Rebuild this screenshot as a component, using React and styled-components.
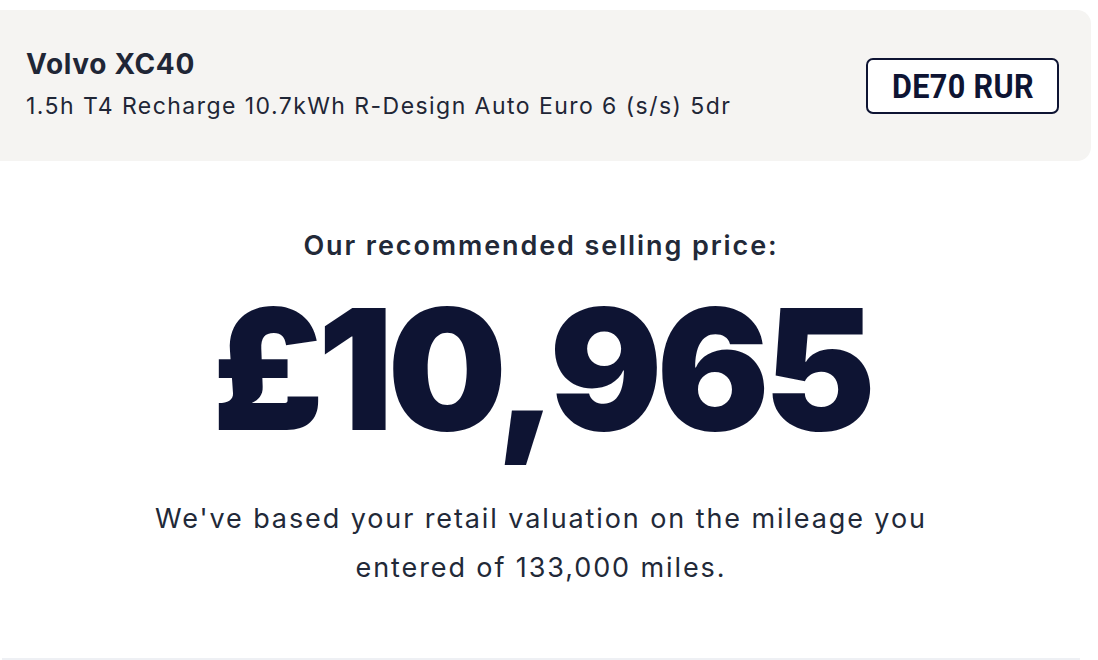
import React from "react";
import styled, { createGlobalStyle } from "styled-components";

const Global = createGlobalStyle`
  html, body { margin: 0; padding: 0; background: #ffffff; }
  body { font-family: Inter, "Noto Sans", sans-serif; color: #1f2636; overflow: hidden; }
`;

const Page = styled.div`
  width: 1098px;
  height: 660px;
  display: flex;
  flex-direction: column;
  box-sizing: border-box;
  padding-top: 10px;
  overflow: hidden;
`;

const VehicleCard = styled.section`
  margin: 0 7px 0 -14px;
  height: 151px;
  box-sizing: border-box;
  background: #f5f4f2;
  border-radius: 14px;
  display: flex;
  align-items: center;
  justify-content: space-between;
  padding: 0 32px 0 40px;
`;

const VehicleInfo = styled.div`
  display: flex;
  flex-direction: column;
  gap: 10px;
  padding-bottom: 3px;
`;

const Model = styled.h2`
  margin: 0;
  font-size: 28px;
  font-weight: 700;
  line-height: 34px;
  color: #1f2636;
  letter-spacing: 0.7px;
`;

const Derivative = styled.p`
  margin: 0;
  font-size: 23px;
  font-weight: 400;
  line-height: 30px;
  color: #1f2636;
  letter-spacing: 1.45px;
`;

const Plate = styled.div`
  width: 193px;
  height: 56px;
  box-sizing: border-box;
  border: 2px solid #0e1433;
  border-radius: 7px;
  background: #ffffff;
  display: flex;
  align-items: center;
  justify-content: center;
`;

/* number-plate lettering: a narrowed bold face */
const PlateText = styled.span`
  display: inline-block;
  font-family: Roboto, "Liberation Sans", sans-serif;
  font-weight: 700;
  font-size: 34px;
  line-height: 1;
  color: #0e1433;
  letter-spacing: 0.4px;
  transform: scaleX(0.9);
  white-space: nowrap;
`;

const Valuation = styled.main`
  flex: 1;
  width: 1082px;
  display: flex;
  flex-direction: column;
  align-items: center;
  text-align: center;
  padding-top: 68px;
  box-sizing: border-box;
`;

const Label = styled.h3`
  margin: 0;
  font-size: 27px;
  font-weight: 600;
  line-height: 34px;
  color: #222938;
  letter-spacing: 1.9px;
`;

const Price = styled.div`
  margin-top: 6px;
  font-size: 168px;
  font-weight: 900;
  line-height: 200px;
  color: #0e1433;
  letter-spacing: -6px;
`;

const Note = styled.p`
  margin: 25px 0 0;
  font-size: 27px;
  font-weight: 400;
  line-height: 49px;
  color: #222938;
  letter-spacing: 1.9px;
`;

const Divider = styled.hr`
  margin: 0 18px 0 2px;
  border: 0;
  height: 2px;
  background: #eef0f4;
`;

export default function App() {
  return (
    <Page>
      <Global />
      <VehicleCard>
        <VehicleInfo>
          <Model>Volvo XC40</Model>
          <Derivative>1.5h T4 Recharge 10.7kWh R-Design Auto Euro 6 (s/s) 5dr</Derivative>
        </VehicleInfo>
        <Plate>
          <PlateText>DE70 RUR</PlateText>
        </Plate>
      </VehicleCard>
      <Valuation>
        <Label>Our recommended selling price:</Label>
        <Price>£10,965</Price>
        <Note>
          We've based your retail valuation on the mileage you
          <br />
          entered of 133,000 miles.
        </Note>
      </Valuation>
      <Divider />
    </Page>
  );
}
